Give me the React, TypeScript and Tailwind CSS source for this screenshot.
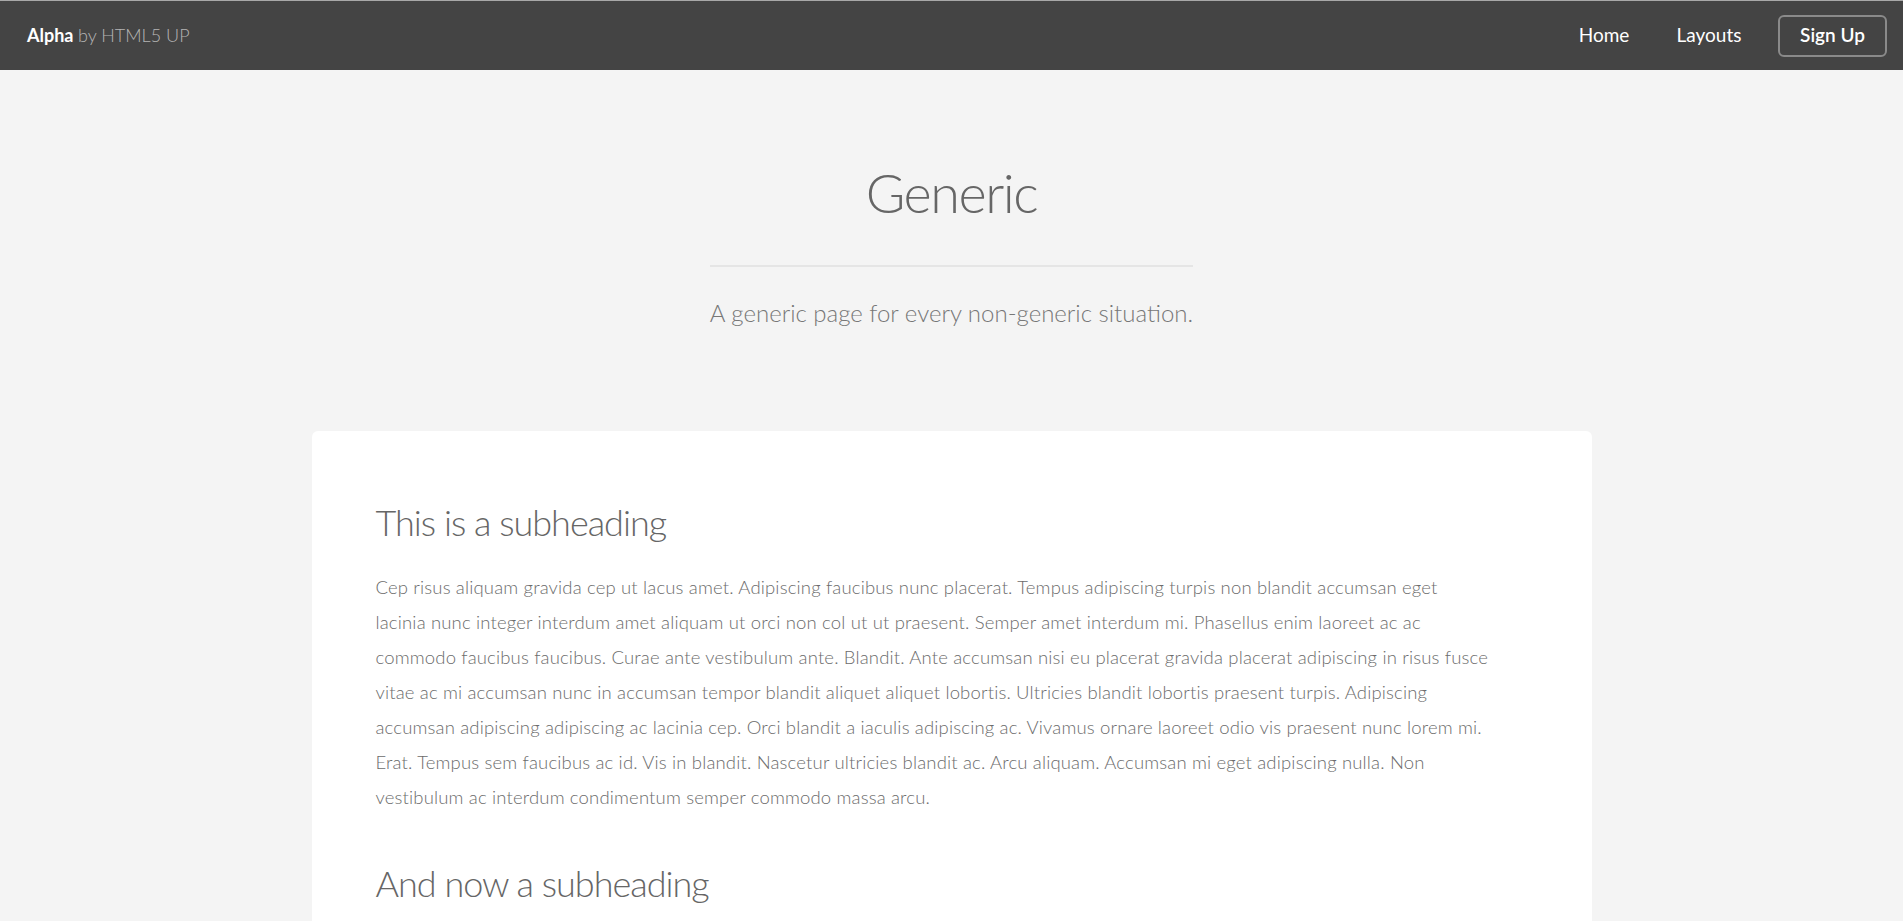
import React from "react";

const FONT = '"Lato", "Open Sans", "Liberation Sans", sans-serif';

const lines = [
  "Cep risus aliquam gravida cep ut lacus amet. Adipiscing faucibus nunc placerat. Tempus adipiscing turpis non blandit accumsan eget",
  "lacinia nunc integer interdum amet aliquam ut orci non col ut ut praesent. Semper amet interdum mi. Phasellus enim laoreet ac ac",
  "commodo faucibus faucibus. Curae ante vestibulum ante. Blandit. Ante accumsan nisi eu placerat gravida placerat adipiscing in risus fusce",
  "vitae ac mi accumsan nunc in accumsan tempor blandit aliquet aliquet lobortis. Ultricies blandit lobortis praesent turpis. Adipiscing",
  "accumsan adipiscing adipiscing ac lacinia cep. Orci blandit a iaculis adipiscing ac. Vivamus ornare laoreet odio vis praesent nunc lorem mi.",
  "Erat. Tempus sem faucibus ac id. Vis in blandit. Nascetur ultricies blandit ac. Arcu aliquam. Accumsan mi eget adipiscing nulla. Non",
  "vestibulum ac interdum condimentum semper commodo massa arcu.",
];

function Para() {
  return (
    <p className="text-[18.5px] leading-[35px] font-light text-[#6c6c6c] tracking-[0.16px] whitespace-nowrap">
      {lines.map((l, i) => (
        <React.Fragment key={i}>
          {l}
          {i < lines.length - 1 && <br />}
        </React.Fragment>
      ))}
    </p>
  );
}

export default function App() {
  return (
    <div className="min-h-screen bg-[#f4f4f4]" style={{ fontFamily: FONT }}>
      <header className="h-[70px] bg-[#444] border-t border-[#a8a8a8] flex items-center justify-between pl-[27px] pr-[16px]">
        <h1 className="text-[18px]">
          <span className="font-bold text-white">Alpha</span>{" "}
          <span className="font-light text-[#b4b4b4]">by HTML5 UP</span>
        </h1>
        <nav className="flex items-center">
          <a className="w-[90px] text-center text-[19px] text-white font-normal">Home</a>
          <a className="w-[106px] ml-[7px] text-center text-[19px] text-white font-normal">Layouts</a>
          <a className="ml-[16px] w-[109px] h-[42px] flex items-center justify-center rounded-[6px] border-2 border-[#8a8a8a] text-[19px] text-white font-semibold">
            Sign Up
          </a>
        </nav>
      </header>

      <main className="pb-[80px]">
        <header className="flex flex-col items-center pt-[95px]">
          <h2 className="text-[54px] leading-[56px] font-light text-[#666] tracking-[-1.5px]">Generic</h2>
          <p className="mt-[44px] border-t-2 border-[#e5e5e5] pt-[28px] text-[24px] leading-[35px] font-light text-[#777]">
            A generic page for every non-generic situation.
          </p>
        </header>

        <section className="mx-auto mt-[101px] w-[1280px] bg-white rounded-[6px] px-[64px] pt-[63px] pb-[64px]">
          <h3 className="text-[36px] leading-[57px] font-light text-[#666] tracking-[-1px]">This is a subheading</h3>
          <div className="mt-[19px]">
            <Para />
          </div>
          <h3 className="mt-[40px] text-[36px] leading-[57px] font-light text-[#666] tracking-[-1px]">And now a subheading</h3>
          <div className="mt-[19px]">
            <Para />
          </div>
        </section>
      </main>
    </div>
  );
}
